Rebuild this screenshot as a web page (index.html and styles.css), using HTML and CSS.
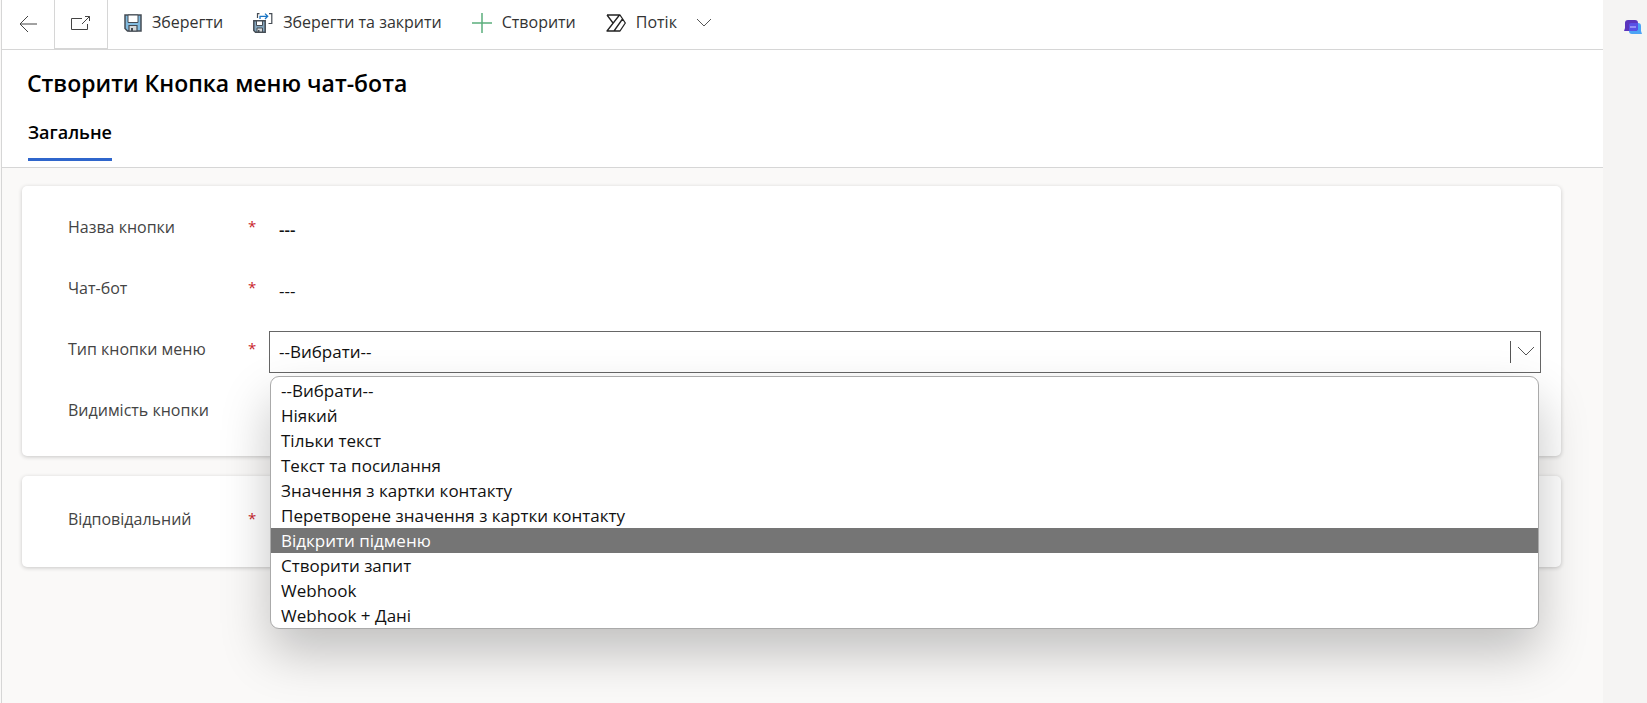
FILE: index.html
```html
<!DOCTYPE html>
<html lang="uk">
<head>
<meta charset="utf-8">
<meta name="viewport" content="width=device-width, initial-scale=1">
<title>Створити Кнопка меню чат-бота</title>
<link rel="stylesheet" href="styles.css">
</head>
<body>
<div class="app">
  <div class="page">
    <header class="header">
      <nav class="commands" aria-label="Команди">
        <button class="square back" type="button" aria-label="Назад">
          <svg width="18" height="18" viewBox="0 0 18 18" fill="none" stroke="#444"><path d="M18 9H1M9 1L1 9l8 8"/></svg>
        </button>
        <button class="square popout" type="button" aria-label="Відкрити в новому вікні">
          <svg width="20" height="16" viewBox="0 0 20 16" fill="none" stroke="#444"><path d="M11 3.500H.5v11h16V9M11 9l7.500-7.500M14 1.500h4.500V6"/></svg>
        </button>
        <button class="command" type="button">
          <svg width="18" height="18" viewBox="0 0 18 18"><path d="M1 1h16v16H3.500L1 14.500z" fill="#83bbdf" stroke="#454c54" stroke-width="1.500"/><path d="M4 1h10v7.500H4z" fill="#fff" stroke="#454c54"/><path d="M5 11.500h8V17H5z" fill="#d5d8da" stroke="#454c54" stroke-width="1.200"/><path d="M7 14h2v3H7z" fill="#454c54"/></svg>
          <span>Зберегти</span>
        </button>
        <button class="command" type="button">
          <svg width="20" height="20" viewBox="0 0 20 20" fill="none"><path d="M4.500 5V.7H6.500M16 .7h2.800v9.800H15.500" stroke="#454c54" stroke-width="1.200"/><path d="M7 6V3.300H14.500M12 .6L14.700 3.300l-2.700 2.700" stroke="#1b75c4" stroke-width="1.300"/><path d="M.8 7.800h11.400v11.400H2.500L.8 17.500z" fill="#83a5bd" stroke="#454c54" stroke-width="1.500"/><path d="M3.500 8h6v4.500h-6z" fill="#fff" stroke="#454c54"/><path d="M4 15h5.500v4H4z" fill="#d5d8da" stroke="#454c54"/><path d="M5 17h1.500v2H5z" fill="#454c54"/></svg>
          <span>Зберегти та закрити</span>
        </button>
        <button class="command" type="button">
          <svg width="20" height="20" viewBox="0 0 20 20" stroke="#5bae7c" stroke-width="1.500"><path d="M10 0v20M0 10h20"/></svg>
          <span>Створити</span>
        </button>
        <button class="command" type="button">
          <svg width="20" height="18" viewBox="0 0 20 18" fill="none" stroke="#222" stroke-width="1.300" stroke-linejoin="round"><path d="M1 1h13l5.300 8L14 17H1L13.500 1M1 1l6 8M8 17L16.500 5"/></svg>
          <span>Потік</span>
          <svg class="caret" width="16" height="9" viewBox="0 0 16 9" fill="none" stroke="#555"><path d="M1 1l7 7 7-7"/></svg>
        </button>
      </nav>
      <h1 class="title">Створити Кнопка меню чат-бота</h1>
      <div class="tabs" role="tablist">
        <button class="tab" type="button" role="tab" aria-selected="true">Загальне</button>
      </div>
    </header>
    <main class="form">
      <section class="card">
        <div class="row">
          <label class="label" for="name">Назва кнопки</label><span class="star">*</span>
          <div class="field"><input class="control strong" id="name" type="text" value="---"></div>
        </div>
        <div class="row">
          <label class="label" for="bot">Чат-бот</label><span class="star">*</span>
          <div class="field"><input class="control" id="bot" type="text" value="---"></div>
        </div>
        <div class="row">
          <label class="label" for="type">Тип кнопки меню</label><span class="star">*</span>
          <div class="field">
            <select class="control select" id="type"><option>--Вибрати--</option></select>
            <span class="arrow"><svg width="18" height="11" viewBox="0 0 18 11" fill="none" stroke="#555"><path d="M1 1l8 8 8-8"/></svg></span>
            <ul class="menu" role="listbox" aria-label="Тип кнопки меню">
              <li class="option" role="option">--Вибрати--</li>
              <li class="option" role="option">Ніякий</li>
              <li class="option" role="option">Тільки текст</li>
              <li class="option" role="option">Текст та посилання</li>
              <li class="option" role="option">Значення з картки контакту</li>
              <li class="option" role="option">Перетворене значення з картки контакту</li>
              <li class="option active" role="option" aria-selected="true">Відкрити підменю</li>
              <li class="option" role="option">Створити запит</li>
              <li class="option" role="option">Webhook</li>
              <li class="option" role="option">Webhook + Дані</li>
            </ul>
          </div>
        </div>
        <div class="row">
          <span class="label">Видимість кнопки</span>
        </div>
      </section>
      <section class="card owner">
        <div class="row">
          <span class="label">Відповідальний</span><span class="star">*</span>
        </div>
      </section>
    </main>
  </div>
  <aside class="rail">
    <button class="chat" type="button" aria-label="Чат">
      <svg width="18" height="14" viewBox="0 0 18 14"><path d="M8 3h6q3 0 3 3v5l1 3H8q-3 0-3-3V6q0-3 3-3z" fill="#4ba3f5"/><path d="M4 0h7q3 0 3 3v5q0 3-3 3H0l1-3V3q0-3 3-3z" fill="#5b35bd"/><path d="M7 3h7v5q0 3-3 3H5V5q0-2 2-2z" fill="#5a50e6"/><path d="M6 7h6" stroke="#a9a5fa" stroke-width="1.500"/></svg>
    </button>
  </aside>
</div>
</body>
</html>
```
FILE: styles.css
```css
* { box-sizing: border-box; }

body {
  margin: 0;
  background: #faf9f8;
  color: #111;
  font-family: "Segoe UI", "Open Sans", "Noto Sans", sans-serif;
  font-size: 17px;
  line-height: 25px;
}

button, input, select { font: inherit; color: inherit; }

button {
  margin: 0;
  padding: 0;
  border: 0;
  background: none;
}

svg { display: block; flex: none; }

.app {
  display: flex;
  min-height: 100vh;
  overflow: hidden;
}

.page {
  flex: 1;
  min-width: 0;
  margin-left: 1px;
  border-left: 1px solid #d6d6d6;
}

.header {
  background: #fff;
  border-bottom: 1px solid #d6d6d6;
}

.commands {
  display: flex;
  height: 50px;
  border-bottom: 1px solid #d6d6d6;
  color: #333;
}

.square {
  display: flex;
  align-items: center;
  justify-content: center;
  width: 53px;
  height: 49px;
  padding-bottom: 2px;
  border-right: 1px solid #d6d6d6;
}

.popout { border-bottom: 1px solid #d6d6d6; }

.command {
  display: flex;
  align-items: center;
  gap: 10px;
  height: 45px;
  margin-left: 16px;
  margin-right: 14px;
  font-size: 16px;
}

.caret { margin-left: 9px; }

.title {
  margin: 0;
  padding: 17px 25px 0;
  font-size: 23px;
  line-height: 32px;
  font-weight: 600;
  color: #000;
}

.tabs {
  display: flex;
  padding: 18px 26px 6px;
}

.tab {
  height: 44px;
  padding-bottom: 11px;
  border-bottom: 3px solid #2f66cc;
  font-size: 18px;
  font-weight: 600;
  color: #000;
}

.form {
  display: flex;
  flex-direction: column;
  gap: 20px;
  padding: 18px 42px 40px 20px;
}

.card {
  padding: 13px 20px 13px 46px;
  background: #fff;
  border-radius: 5px;
  box-shadow: 0 1px 4px rgba(0, 0, 0, 0.2);
}

.owner {
  padding-top: 15px;
  padding-bottom: 15px;
}

.row {
  display: flex;
  align-items: center;
  height: 61px;
}

.label {
  width: 180px;
  padding-bottom: 4px;
  color: #444;
  font-size: 16px;
}

.star {
  width: 21px;
  padding-bottom: 6px;
  color: #c8242b;
  font-size: 15px;
}

.field {
  position: relative;
  flex: 1;
}

.control {
  display: block;
  width: 100%;
  height: 42px;
  padding: 0 9px;
  border: 1px solid transparent;
  border-radius: 0;
  background: transparent;
  color: #111;
  outline: 0;
}

.strong { font-weight: 600; }

.select {
  appearance: none;
  border-color: #666;
}

.arrow {
  position: absolute;
  top: 10px;
  right: 6px;
  display: flex;
  align-items: center;
  height: 22px;
  padding-left: 6px;
  border-left: 1px solid #555;
  pointer-events: none;
}

.menu {
  position: absolute;
  z-index: 2;
  top: 45px;
  left: 1px;
  right: 2px;
  margin: 0;
  padding: 1px 0 0;
  overflow: hidden;
  list-style: none;
  background: #fff;
  border: 1px solid #aaa;
  border-radius: 9px;
  box-shadow: 0 24px 50px rgba(0, 0, 0, 0.23);
}

.option { padding: 0 10px; }

.active {
  background: #757575;
  color: #fff;
}

.rail {
  width: 44px;
  padding: 20px 0 0 21px;
  background: #f5f4f3;
}

.chat {
  display: block;
}
```
